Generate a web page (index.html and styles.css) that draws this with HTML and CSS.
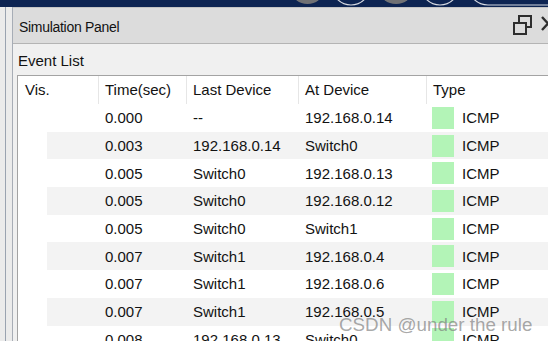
FILE: index.html
```html
<!DOCTYPE html>
<html>
<head>
<meta charset="utf-8">
<link rel="stylesheet" href="styles.css">
</head>
<body>
<div class="topbar">
  <svg width="548" height="7" viewBox="0 0 548 7">
    <ellipse cx="307.5" cy="-9" rx="15.5" ry="13" fill="#707174"/>
    <circle cx="351" cy="-14" r="19" fill="none" stroke="#d4d8e0" stroke-width="1.2"/>
    <ellipse cx="396" cy="-9" rx="16" ry="13" fill="#707174"/>
    <circle cx="440" cy="-14" r="19" fill="none" stroke="#d4d8e0" stroke-width="1.2"/>
    <rect x="468" y="-40" width="140" height="45" rx="20" fill="none" stroke="#d4d8e0" stroke-width="1.2"/>
  </svg>
</div>
<div class="main">
  <div class="side"></div>
  <div class="panel">
    <div class="titlebar">
      <span class="title">Simulation Panel</span>
      <svg class="ctrls" width="43" height="35" viewBox="0 0 43 35">
        <rect x="7" y="8" width="12" height="11" fill="none" stroke="#2e2e2e" stroke-width="2"/>
        <rect x="2" y="15" width="12" height="11" fill="#dcdcdc" stroke="#2e2e2e" stroke-width="2"/>
        <path d="M30 9 L42 22 M42 9 L30 22" stroke="#2e2e2e" stroke-width="2.4"/>
      </svg>
    </div>
    <div class="content">
      <div class="label">Event List</div>
      <div class="table">
        <div class="row head">
          <div class="c vis">Vis.</div><div class="c">Time(sec)</div><div class="c">Last Device</div><div class="c">At Device</div><div class="c last">Type</div>
        </div>
        <div class="row">
          <div class="c vis"></div><div class="c">0.000</div><div class="c">--</div><div class="c">192.168.0.14</div><div class="c type"><span class="sq"></span>ICMP</div>
        </div>
        <div class="row alt">
          <div class="c vis"></div><div class="c">0.003</div><div class="c">192.168.0.14</div><div class="c">Switch0</div><div class="c type"><span class="sq"></span>ICMP</div>
        </div>
        <div class="row">
          <div class="c vis"></div><div class="c">0.005</div><div class="c">Switch0</div><div class="c">192.168.0.13</div><div class="c type"><span class="sq"></span>ICMP</div>
        </div>
        <div class="row alt">
          <div class="c vis"></div><div class="c">0.005</div><div class="c">Switch0</div><div class="c">192.168.0.12</div><div class="c type"><span class="sq"></span>ICMP</div>
        </div>
        <div class="row">
          <div class="c vis"></div><div class="c">0.005</div><div class="c">Switch0</div><div class="c">Switch1</div><div class="c type"><span class="sq"></span>ICMP</div>
        </div>
        <div class="row alt">
          <div class="c vis"></div><div class="c">0.007</div><div class="c">Switch1</div><div class="c">192.168.0.4</div><div class="c type"><span class="sq"></span>ICMP</div>
        </div>
        <div class="row">
          <div class="c vis"></div><div class="c">0.007</div><div class="c">Switch1</div><div class="c">192.168.0.6</div><div class="c type"><span class="sq"></span>ICMP</div>
        </div>
        <div class="row alt">
          <div class="c vis"></div><div class="c">0.007</div><div class="c">Switch1</div><div class="c">192.168.0.5</div><div class="c type"><span class="sq"></span>ICMP</div>
        </div>
        <div class="row">
          <div class="c vis"></div><div class="c">0.008</div><div class="c">192.168.0.13</div><div class="c">Switch0</div><div class="c type"><span class="sq"></span>ICMP</div>
        </div>
      </div>
    </div>
  </div>
</div>
<div class="watermark">CSDN @under the rule</div>
</body>
</html>
```

FILE: styles.css
```css
html, body {
  margin: 0;
  width: 548px;
  height: 341px;
  overflow: hidden;
}
body {
  font-family: "Liberation Sans", Arial, sans-serif;
  color: #121212;
  background: #f0f0f0;
  position: relative;
}
.topbar {
  height: 7px;
  background: #0d2452;
}
.topbar svg {
  display: block;
}
.main {
  display: flex;
  height: 334px;
}
.side {
  width: 12px;
  flex-shrink: 0;
  background: linear-gradient(to right, #ebebeb 5px, #9aa3b0 5px, #9aa3b0 6px, #ebebeb 6px);
}
.panel {
  flex: 1;
  min-width: 0;
  border-left: 1px solid #a7adb6;
  display: flex;
  flex-direction: column;
  overflow: hidden;
}
.titlebar {
  height: 35px;
  flex-shrink: 0;
  background: #dcdcdc;
  border-top: 1px solid #c4c4c4;
  border-bottom: 1px solid #b4b4b4;
  display: flex;
  align-items: center;
  padding-left: 6px;
  overflow: hidden;
}
.title {
  font-size: 14px;
  letter-spacing: -0.3px;
  padding-top: 3px;
}
.ctrls {
  margin-left: auto;
  margin-right: -7px;
  flex-shrink: 0;
  display: block;
}
.content {
  flex: 1;
  padding-left: 4px;
  background: #f0f0f0;
}
.label {
  font-size: 15px;
  line-height: 20px;
  padding: 7px 0 4px 1px;
}
.table {
  background: #fff;
  border-top: 1px solid #a3a3a3;
  border-left: 1px solid #a3a3a3;
}
.row {
  display: grid;
  grid-template-columns: 81px 88px 112px 128px 1fr;
  height: 27.7px;
  align-items: center;
  font-size: 15px;
  white-space: nowrap;
}
.row.alt {
  background: linear-gradient(to right, #fff 29px, #f3f3f3 29px);
}
.c {
  padding-left: 6px;
}
.c.vis {
  padding-left: 7px;
}
.row.head {
  height: 28px;
  align-items: stretch;
}
.row.head .c {
  line-height: 28px;
  border-right: 1px solid #e6e6e6;
}
.row.head .c.last {
  border-right: none;
}
.c.type {
  display: flex;
  align-items: center;
  gap: 8px;
  padding-left: 5px;
}
.sq {
  width: 22px;
  height: 22px;
  background: #b3f4b7;
  flex-shrink: 0;
}
.watermark {
  position: absolute;
  left: 339px;
  top: 315px;
  font-size: 18.8px;
  line-height: 19px;
  color: rgba(120, 120, 120, 0.65);
  white-space: nowrap;
}
```
